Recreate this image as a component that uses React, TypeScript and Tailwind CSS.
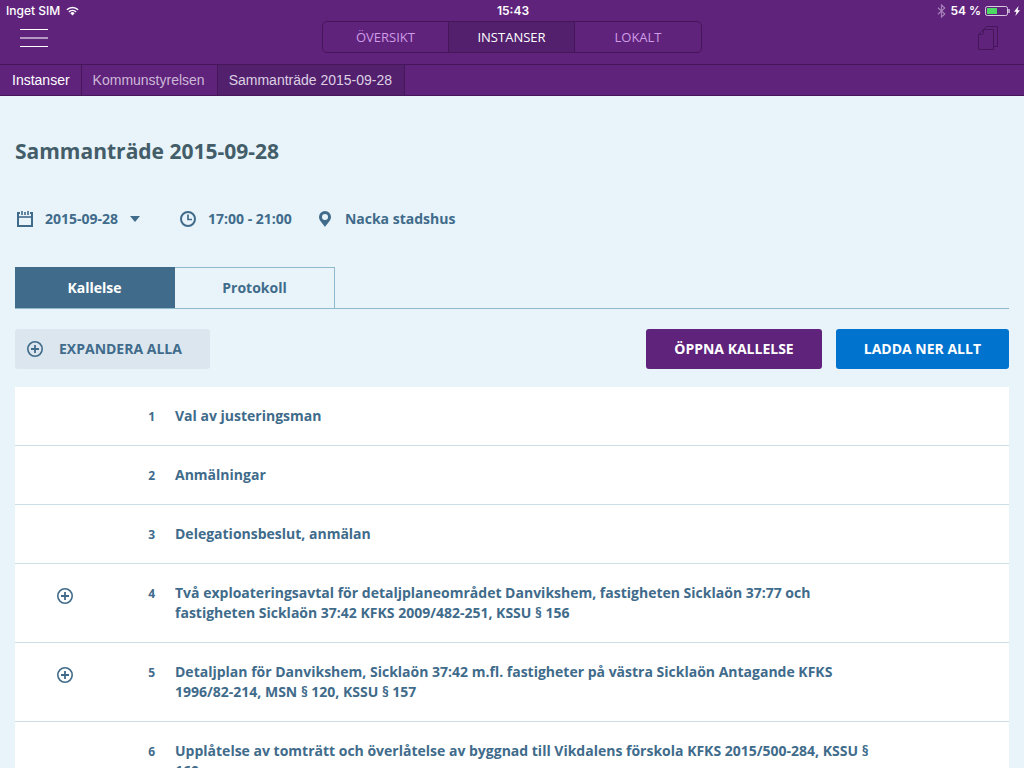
import { useState } from "react";

type AgendaItem = {
    id: number;
    title: string;
    expandable?: boolean;
};

const agenda: AgendaItem[] = [
    { id: 1, title: "Val av justeringsman" },
    { id: 2, title: "Anmälningar" },
    { id: 3, title: "Delegationsbeslut, anmälan" },
    { id: 4, title: "Två exploateringsavtal för detaljplaneområdet Danvikshem, fastigheten Sicklaön 37:77 och fastigheten Sicklaön 37:42 KFKS 2009/482-251, KSSU § 156", expandable: true },
    { id: 5, title: "Detaljplan för Danvikshem, Sicklaön 37:42 m.fl. fastigheter på västra Sicklaön Antagande KFKS 1996/82-214, MSN § 120, KSSU § 157", expandable: true },
    { id: 6, title: "Upplåtelse av tomträtt och överlåtelse av byggnad till Vikdalens förskola KFKS 2015/500-284, KSSU § 160" },
];

const sections = ["ÖVERSIKT", "INSTANSER", "LOKALT"];

function PlusCircle() {
    return (
        <svg width="16" height="16" viewBox="0 0 16 16" fill="none" stroke="currentColor" aria-hidden="true">
            <circle cx="8" cy="8" r="7.2" strokeWidth="1.6" />
            <path d="M8 4v8M4 8h8" strokeWidth="1.8" />
        </svg>
    );
}

function StatusBar() {
    return (
        <div className="grid h-5 grid-cols-3 items-center pl-1.5 pr-1 pt-px font-['Inter','Liberation_Sans',sans-serif] text-[12px] leading-5 font-medium text-white">
            <div className="flex items-center gap-1.5">
                <span>Inget SIM</span>
                <svg width="13" height="10" viewBox="0 0 14 10" fill="none" stroke="currentColor" strokeWidth="1.7" aria-hidden="true">
                    <path d="M1 3.7a8.5 8.5 0 0 1 12 0" />
                    <path d="M3.2 6a5.4 5.4 0 0 1 7.6 0" />
                    <path d="M7 9.8 4.7 7.4a3.2 3.2 0 0 1 4.6 0z" fill="currentColor" stroke="none" />
                </svg>
            </div>
            <div className="text-center font-semibold">15:43</div>
            <div className="flex items-center justify-end gap-1">
                <svg width="9" height="14" viewBox="0 0 9 14" fill="none" stroke="#a67fb8" strokeWidth="1.2" aria-hidden="true">
                    <path d="M1 3.8 7.8 10 4.5 13V1l3.3 3L1 10.2" />
                </svg>
                <span className="font-semibold">54 %</span>
                <svg width="25" height="10" viewBox="0 0 25 10" fill="none" aria-hidden="true">
                    <rect x=".5" y=".5" width="22" height="9" rx="1.8" stroke="#d9c9e0" />
                    <rect x="2" y="2" width="10" height="6" fill="#4cd964" />
                    <path d="M24 3v4" stroke="#d9c9e0" strokeWidth="1.4" />
                </svg>
                <svg width="6" height="10" viewBox="0 0 6 10" fill="currentColor" aria-hidden="true">
                    <path d="M4.6 0 0 5.8h2.4L1.4 10 6 4.2H3.6z" />
                </svg>
            </div>
        </div>
    );
}

function TopNav() {
    return (
        <div className="grid h-11 grid-cols-[1fr_380px_1fr] items-start px-5">
            <button aria-label="Meny" className="flex h-9 w-7 flex-col justify-center gap-[7px] cursor-pointer">
                <span className="h-px w-full bg-white" />
                <span className="h-0.5 w-full bg-[#b597c4]" />
                <span className="h-px w-full bg-white" />
            </button>

            <nav className="mt-px grid h-8 grid-cols-3 overflow-hidden rounded-[5px] border border-[#451659] text-[13px]">
                {sections.map((s) => (
                    <a key={s} href="#" className={`flex items-center justify-center border-[#451659] pt-0.5 not-last:border-r ${s === "INSTANSER" ? "bg-[#53206e] text-white" : "text-[#cf9ce6]"}`}>
                        {s}
                    </a>
                ))}
            </nav>

            <button aria-label="Dokument" className="mt-1.5 mr-1.5 justify-self-end text-[#451659] cursor-pointer">
                <svg width="21" height="25" viewBox="0 0 21 25" fill="none" stroke="currentColor" aria-hidden="true">
                    <path d="M6.5 3.5h10v20H1.500v-15z" />
                    <path d="M1.5 8.5h3q2 0 2-2v-3" />
                    <path d="M6.5 3.5l3-3h11v20h-4" />
                </svg>
            </button>
        </div>
    );
}

function Breadcrumbs() {
    return (
        <nav className="flex h-8 border-y border-[#451659] font-['Liberation_Sans',sans-serif] text-[14px]">
            <a href="#" className="flex items-center border-r border-[#451659] pl-3 pr-[11px] text-white">Instanser</a>
            <a href="#" className="flex items-center border-r border-[#451659] pl-[11px] pr-3 text-[#cdb8d7]">Kommunstyrelsen</a>
            <a href="#" className="flex items-center border-r border-[#451659] bg-[#53206e] pl-[11px] pr-3 text-[#ddd0e3]">Sammanträde 2015-09-28</a>
        </nav>
    );
}

function MeetingInfo() {
    return (
        <div className="mt-[42px] flex h-5 items-center text-[14px] leading-5">
            <button className="flex items-center cursor-pointer">
                <svg width="20" height="16" viewBox="0 0 20 16" fill="none" stroke="currentColor" aria-hidden="true">
                    <path d="M5 2H3v13h14V2h-2" strokeWidth="2" />
                    <path d="M2 6h16" strokeWidth="1.6" />
                    <path d="M7 0v4M13 0v4M10 1v3" strokeWidth="1.6" />
                </svg>
                <span className="ml-2.5">2015-09-28</span>
                <svg width="10" height="6" viewBox="0 0 10 6" fill="currentColor" className="ml-3" aria-hidden="true">
                    <path d="M0 0h10L5 6z" />
                </svg>
            </button>
            <div className="ml-10 flex items-center gap-3">
                <svg width="16" height="16" viewBox="0 0 16 16" fill="none" stroke="currentColor" aria-hidden="true">
                    <circle cx="8" cy="8" r="7" strokeWidth="2" />
                    <path d="M8 3.5v5h4" strokeWidth="1.7" />
                </svg>
                <span>17:00 - 21:00</span>
            </div>
            <div className="ml-[27px] flex items-center gap-3.5">
                <svg width="12" height="16" viewBox="0 0 12 16" fill="currentColor" fillRule="evenodd" aria-hidden="true">
                    <path d="M6 0a6 6 0 0 1 6 6c0 3.4-3.4 6.2-6 10C3.4 12.2 0 9.4 0 6a6 6 0 0 1 6-6zm0 3a3 3 0 1 0 0 6 3 3 0 0 0 0-6z" />
                </svg>
                <span>Nacka stadshus</span>
            </div>
        </div>
    );
}

export default function App() {
    const [tab, setTab] = useState("Kallelse");

    return (
        <div className="flex h-screen flex-col bg-[#e8f4f9] font-['Open_Sans','Noto_Sans',sans-serif]">
            <header className="shrink-0 bg-[#5f237c]">
                <StatusBar />
                <TopNav />
                <Breadcrumbs />
            </header>

            <main className="flex-1 overflow-y-auto px-[15px] pt-[39px] font-bold text-[#406b8b] [scrollbar-width:none]">
                <h1 className="text-[21px] leading-8 text-[#435d69]">Sammanträde 2015-09-28</h1>

                <MeetingInfo />

                {/* Tabs */}
                <div role="tablist" className="mt-[38px] flex border-b border-[#8fbacd] text-[14px]">
                    {["Kallelse", "Protokoll"].map((t) => (
                        <button
                            key={t}
                            role="tab"
                            aria-selected={tab === t}
                            onClick={() => setTab(t)}
                            className={`h-[41px] w-40 border-t border-r pb-0.5 cursor-pointer ${tab === t ? "border-[#406b8b] bg-[#406b8b] text-white" : "border-[#8fbacd]"}`}
                        >
                            {t}
                        </button>
                    ))}
                </div>

                {/* Actions */}
                <div className="mt-5 flex h-10 gap-3.5 text-[14px]">
                    <button className="mr-auto flex items-center gap-4 rounded-[3px] bg-[#dbe6ee] pl-3 pr-7 cursor-pointer">
                        <PlusCircle />
                        <span className="pb-0.5">EXPANDERA ALLA</span>
                    </button>
                    <button className="rounded-[3px] bg-[#5f237c] px-7 pb-0.5 text-white cursor-pointer">ÖPPNA KALLELSE</button>
                    <button className="rounded-[3px] bg-[#0073cf] px-7 pb-0.5 text-white cursor-pointer">LADDA NER ALLT</button>
                </div>

                {/* Agenda */}
                <ul className="mt-[18px] bg-white">
                    {agenda.map((item) => (
                        <li key={item.id} className="flex border-b border-[#cbdde5] py-[19px] pr-32">
                            <div className="flex w-[100px] shrink-0 items-start justify-center pt-[5px]">
                                {item.expandable && (
                                    <button aria-label={`Expandera punkt ${item.id}`} className="cursor-pointer">
                                        <PlusCircle />
                                    </button>
                                )}
                            </div>
                            <span className="h-5 w-10 shrink-0 pt-px text-right text-[12px] leading-5">{item.id}</span>
                            <p className="ml-5 text-[14px] leading-5">{item.title}</p>
                        </li>
                    ))}
                </ul>
            </main>
        </div>
    );
}
